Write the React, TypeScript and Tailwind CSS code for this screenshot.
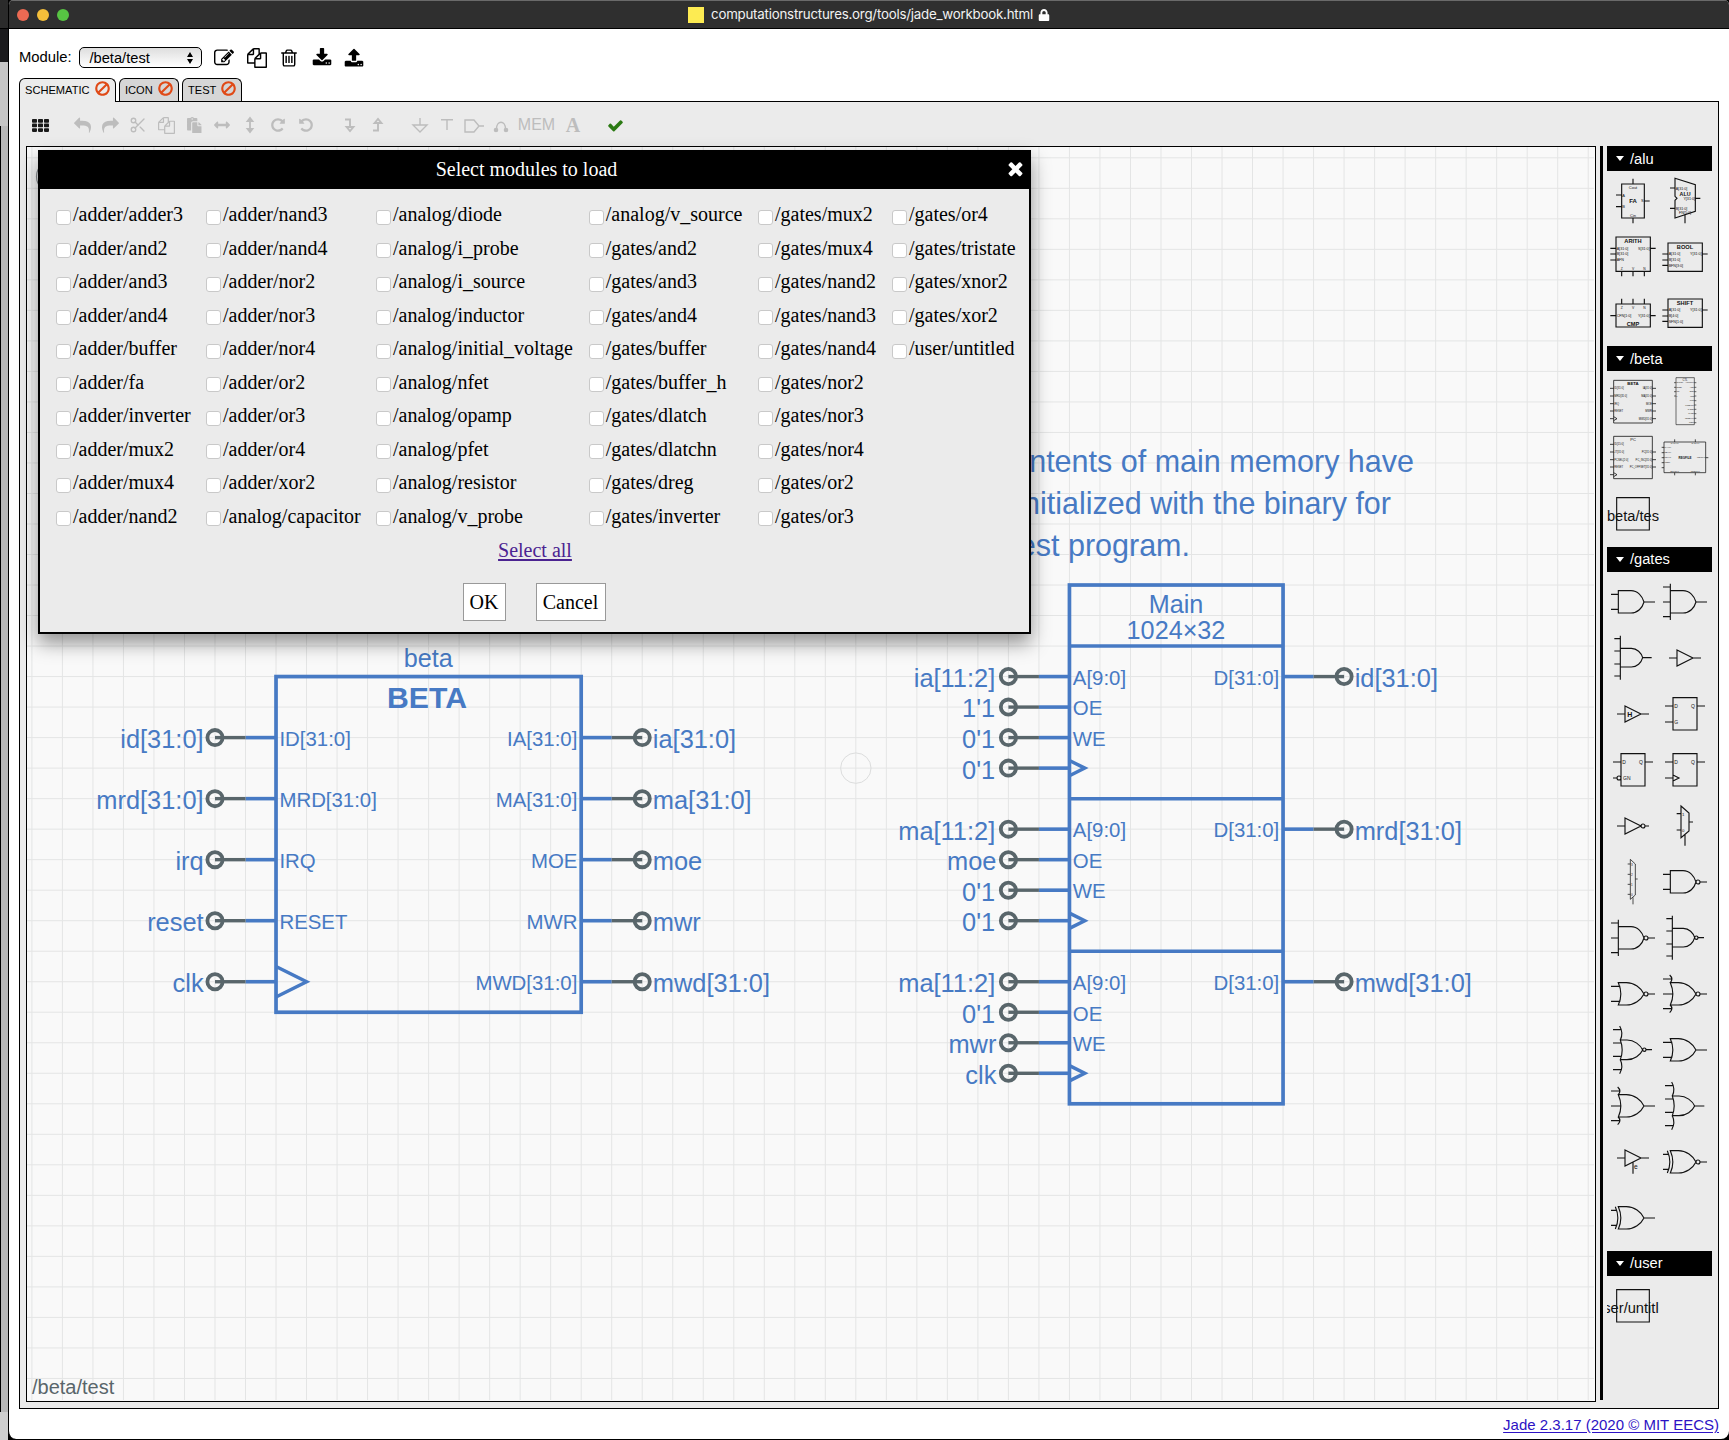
import React from "react";
import { Scissors } from "lucide-react";
import { FaPaste, FaArrowsAltH, FaLock } from "react-icons/fa";

const HELV = '"Liberation Sans", Arial, sans-serif';
const BLUE = "#477ac4";
const GRAY = "#59666b";

/* ---------- toolbar glyphs ---------- */

const GLYPHS = {
  edit: "M888 1184l116-116-152-152-116 116v56h96v96h56zm440-720q-16-16-33 1l-350 350q-17 17-1 33t33-1l350-350q17-17 1-33zm80 594v190q0 119-84.5 203.5t-203.5 84.5h-832q-119 0-203.5-84.5t-84.5-203.5v-832q0-119 84.5-203.5t203.5-84.5h832q63 0 117 25 15 7 18 23 3 17-9 29l-49 49q-14 14-32 8-23-6-45-6h-832q-66 0-113 47t-47 113v832q0 66 47 113t113 47h832q66 0 113-47t47-113v-126q0-13 9-22l64-64q15-15 35-7t20 29zm-96-738l288 288-672 672h-288v-288zm444 132l-92 92-288-288 92-92q28-28 68-28t68 28l152 152q28 28 28 68t-28 68z",
  files: "M1696 384q40 0 68 28t28 68v1216q0 40-28 68t-68 28h-960q-40 0-68-28t-28-68v-288h-544q-40 0-68-28t-28-68v-672q0-40 20-88t48-76l408-408q28-28 76-48t88-20h416q40 0 68 28t28 68v328q68-40 128-40h416zm-544 213l-299 299h299v-299zm-640-384l-299 299h299v-299zm196 647l316-316v-416h-384v416q0 40-28 68t-68 28h-416v640h512v-256q0-40 20-88t48-76zm956 804v-1152h-384v416q0 40-28 68t-68 28h-416v640h896z",
  trash: "M704 736v576q0 14-9 23t-23 9h-64q-14 0-23-9t-9-23v-576q0-14 9-23t23-9h64q14 0 23 9t9 23zm256 0v576q0 14-9 23t-23 9h-64q-14 0-23-9t-9-23v-576q0-14 9-23t23-9h64q14 0 23 9t9 23zm256 0v576q0 14-9 23t-23 9h-64q-14 0-23-9t-9-23v-576q0-14 9-23t23-9h64q14 0 23 9t9 23zm128 724v-948h-896v948q0 22 7 40.5t14.5 27 10.5 8.5h832q3 0 10.5-8.5t14.5-27 7-40.5zm-672-1076h448l-48-117q-7-9-17-11h-317q-10 2-17 11zm928 32v64q0 14-9 23t-23 9h-96v948q0 83-47 143.5t-113 60.5h-832q-66 0-113-58.5t-47-141.5v-952h-96q-14 0-23-9t-9-23v-64q0-14 9-23t23-9h309l70-167q15-37 54-63t79-26h320q40 0 79 26t54 63l70 167h309q14 0 23 9t9 23z",
  download: "M1344 1344q0-26-19-45t-45-19-45 19-19 45 19 45 45 19 45-19 19-45zm256 0q0-26-19-45t-45-19-45 19-19 45 19 45 45 19 45-19 19-45zm128-224v320q0 40-28 68t-68 28h-1472q-40 0-68-28t-28-68v-320q0-40 28-68t68-28h465l135 136q58 56 136 56t136-56l136-136h464q40 0 68 28t28 68zm-325-569q17 41-14 70l-448 448q-18 19-45 19t-45-19l-448-448q-31-29-14-70 17-39 59-39h256v-448q0-26 19-45t45-19h256q26 0 45 19t19 45v448h256q42 0 59 39z",
  upload: "M1344 1472q0-26-19-45t-45-19-45 19-19 45 19 45 45 19 45-19 19-45zm256 0q0-26-19-45t-45-19-45 19-19 45 19 45 45 19 45-19 19-45zm128-224v320q0 40-28 68t-68 28h-1472q-40 0-68-28t-28-68v-320q0-40 28-68t68-28h427q21 56 70.5 92t110.5 36h256q61 0 110.5-36t70.5-92h427q40 0 68 28t28 68zm-325-648q-17 40-59 40h-256v448q0 26-19 45t-45 19h-256q-26 0-45-19t-19-45v-448h-256q-42 0-59-40-17-39 14-69l448-448q18-19 45-19t45 19l448 448q31 30 14 69z",
  ban: "M1440 893q0-161-87-295l-754 753q137 89 297 89 111 0 211.5-43.5t173.5-116.5 116-174.5 43-212.5zm-999 299l755-754q-135-91-300-91-148 0-273 73t-198 199-73 274q0 162 89 299zm1223-299q0 157-61 300t-163.5 246-245 164-298.5 61-298.5-61-245-164-163.5-246-61-300 61-299.5 163.5-245.5 245-164 298.5-61 298.5 61 245 164 163.5 245.5 61 299.5z",
  reply: "M1792 1120q0 166-127 451-3 7-10.5 24t-13.5 30-13 22q-12 17-28 17-15 0-23.5-10t-8.5-25q0-9 2.5-26.5t2.5-23.5q5-68 5-123 0-101-17.5-181t-48.5-138.5-80-101-105.5-69.5-133-42.5-154-21.5-175.5-6h-224v256q0 26-19 45t-45 19-45-19l-512-512q-19-19-19-45t19-45l512-512q19-19 45-19t45 19 19 45v256h224q713 0 875 403 53 134 53 333z",
  repeat: "M1664 256v448q0 26-19 45t-45 19h-448q-42 0-59-40-17-39 14-69l138-138q-148-137-349-137-104 0-198.5 40.5t-163.5 109.5-109.5 163.5-40.5 198.5 40.5 198.5 109.5 163.5 163.5 109.5 198.5 40.5q119 0 225-52t179-147q7-10 23-12 15 0 25 9l137 138q9 8 9.5 20.5t-7.5 22.5q-109 132-264 204.5t-327 72.5q-156 0-298-61t-245-164-164-245-61-298 61-298 164-245 245-164 298-61q147 0 284.5 55.5t244.5 156.5l130-129q29-31 70-14 39 17 39 59z",
  check: "M1671 566q0 40-28 68l-724 724-136 136q-28 28-68 28t-68-28l-136-136-362-362q-28-28-28-68t28-68l136-136q28-28 68-28t68 28l294 295 656-657q28-28 68-28t68 28l136 136q28 28 28 68z",
  times: "M1490 1322q0 40-28 68l-136 136q-28 28-68 28t-68-28l-294-294-294 294q-28 28-68 28t-68-28l-136-136q-28-28-28-68t28-68l294-294-294-294q-28-28-28-68t28-68l136-136q28-28 68-28t68 28l294 294 294-294q28-28 68-28t68 28l136 136q28 28 28 68t-28 68l-294 294 294 294q28 28 28 68z",
};

function Glyph({ name, size, flip }: { name: keyof typeof GLYPHS; size: number; flip?: boolean }) {
  return (
    <svg width={size} height={size} viewBox="0 0 1792 1792" fill="currentColor" className="shrink-0 overflow-visible">
      <path d={GLYPHS[name]} transform={flip ? "translate(1792 0) scale(-1 1)" : undefined} />
    </svg>
  );
}

function Line({ d, w = 20, h = 20, sw = 1.4 }: { d: string; w?: number; h?: number; sw?: number }) {
  return (
    <svg width={w} height={h} viewBox={`0 0 ${w} ${h}`} fill="none" stroke="currentColor" strokeWidth={sw} className="shrink-0">
      <path d={d} />
    </svg>
  );
}

function Cell({ w, children }: { w: string; children?: React.ReactNode }) {
  return <div className={`flex h-full shrink-0 items-center justify-center ${w}`}>{children}</div>;
}

function Toolbar() {
  return (
    <div className="flex h-[44px] items-center pt-[2px] text-[#bdbdbd]">
      <Cell w="w-[40px]">
        <svg width="17" height="13" viewBox="0 0 17 13" fill="#1a1a1a">
          {[0, 1, 2].map((r) =>
            [0, 1, 2].map((c) => <rect key={`${r}${c}`} x={c * 6} y={r * 4.6} width="5" height="3.7" rx="0.8" />)
          )}
        </svg>
      </Cell>
      <div className="w-[8px]" />
      <Cell w="w-[28px]"><Glyph name="reply" size={17} /></Cell>
      <Cell w="w-[28px]"><Glyph name="reply" size={17} flip /></Cell>
      <Cell w="w-[28px]"><Scissors size={18} strokeWidth={1.8} /></Cell>
      <Cell w="w-[28px]"><Glyph name="files" size={17} /></Cell>
      <Cell w="w-[28px]"><FaPaste size={16.5} /></Cell>
      <Cell w="w-[28px]"><FaArrowsAltH size={16} /></Cell>
      <Cell w="w-[28px]"><Line d="M10 4V16M7.600 6L10 3L12.400 6ZM7.600 14L10 17L12.400 14Z" sw={1.8} /></Cell>
      <Cell w="w-[28px]"><Glyph name="repeat" size={16} /></Cell>
      <Cell w="w-[28px]"><Glyph name="repeat" size={16} flip /></Cell>
      <div className="w-[15px]" />
      <Cell w="w-[28px]"><Line d="M6 4.5H11V13M7.6 12L11 16L14.4 12Z" sw={1.9} /></Cell>
      <Cell w="w-[28px]"><Line d="M6 15.5H11V7M7.6 8L11 4L14.4 8Z" sw={1.9} /></Cell>
      <div className="w-[15px]" />
      <Cell w="w-[27px]"><Line d="M10 3V10M3 10H17L10 17Z" /></Cell>
      <Cell w="w-[27px]"><Line d="M4 4.8H16M10 4.8V15" /></Cell>
      <Cell w="w-[27px]"><Line d="M1 5H10L15 11L10 17H1ZM15 11H20" /></Cell>
      <Cell w="w-[27px]">
        <svg width="18" height="16" viewBox="0 0 18 16" fill="none" stroke="currentColor" strokeWidth="1.4">
          <path d="M4.5 12C4.5 3 13.5 3 13.5 12" />
          <circle cx="4" cy="13" r="1.6" fill="currentColor" />
          <circle cx="14" cy="13" r="1.6" fill="currentColor" />
        </svg>
      </Cell>
      <Cell w="w-[45px]"><span className="text-[16px]">MEM</span></Cell>
      <Cell w="w-[28px]">
        <span className="font-bold text-[20px] font-['Liberation_Serif',serif]">A</span>
      </Cell>
      <div className="w-[10px]" />
      <div className="flex text-[#2b7a13]"><Cell w="w-[37px]"><Glyph name="check" size={17} /></Cell></div>
    </div>
  );
}

/* ---------- schematic ---------- */

const U = 30.516;
const gx = (n: number) => 31.9 + n * U;
const gy = (n: number) => 157.8 + n * U;

function Port({ x, y, side, label, gap = 11.4 }: { x: number; y: number; side: "l" | "r"; label: string; gap?: number }) {
  const s = side === "l" ? -1 : 1;
  const cx = gx(x + 2 * s);
  const cy = gy(y);
  return (
    <g>
      <line x1={gx(x)} y1={cy} x2={gx(x + s)} y2={cy} stroke={BLUE} strokeWidth="3.6" />
      <line x1={gx(x + s)} y1={cy} x2={cx} y2={cy} stroke={GRAY} strokeWidth="3.4" />
      <circle cx={cx} cy={cy} r="7.6" fill="none" stroke={GRAY} strokeWidth="3.8" />
      <text x={cx + s * gap} y={cy + 10.4} textAnchor={side === "l" ? "end" : "start"} fontSize="25.4" fill={BLUE}>
        {label}
      </text>
    </g>
  );
}

function PinName({ x, y, side, label }: { x: number; y: number; side: "l" | "r"; label: string }) {
  return (
    <text x={gx(x) + (side === "l" ? 3.4 : -3.8)} y={gy(y) + 8.3} textAnchor={side === "l" ? "start" : "end"} fontSize="20.4" fill={BLUE}>
      {label}
    </text>
  );
}

const betaPins: [number, string, string, string, string][] = [
  [19, "id[31:0]", "ID[31:0]", "ia[31:0]", "IA[31:0]"],
  [21, "mrd[31:0]", "MRD[31:0]", "ma[31:0]", "MA[31:0]"],
  [23, "irq", "IRQ", "moe", "MOE"],
  [25, "reset", "RESET", "mwr", "MWR"],
  [27, "clk", "", "mwd[31:0]", "MWD[31:0]"],
];

const memPorts: [number, string[], string][] = [
  [17, ["ia[11:2]", "1'1", "0'1", "0'1"], "id[31:0]"],
  [22, ["ma[11:2]", "moe", "0'1", "0'1"], "mrd[31:0]"],
  [27, ["ma[11:2]", "0'1", "mwr", "clk"], "mwd[31:0]"],
];

function Schematic() {
  const cols = Array.from({ length: 52 }, (_, i) => gx(i));
  const rows = Array.from({ length: 41 }, (_, i) => gy(i));
  return (
    <svg width="1568" height="1254" viewBox="27 147 1568 1254" fontFamily={HELV} className="block">
      <g stroke="#e4e5e5" strokeWidth="1">
        {cols.map((x) => <line key={x} x1={x} y1="147" x2={x} y2="1400" />)}
        {rows.map((y) => <line key={y} x1="27" y1={y} x2="1594" y2={y} />)}
      </g>
      <circle cx="52.500" cy="176.500" r="16" fill="none" stroke="#8a8f92" strokeWidth="1.2" />
      <circle cx={gx(27)} cy={gy(20)} r="15.2" fill="none" stroke="#dcdddd" strokeWidth="1" />

      <g fill={BLUE} fontSize="30.5" textAnchor="end">
        <text x="1414" y="472">The contents of main memory have</text>
        <text x="1391" y="514">been initialized with the binary for</text>
        <text x="1190" y="556">the test program.</text>
      </g>

      <text x="428.3" y="667" textAnchor="middle" fontSize="25.2" fill={BLUE}>beta</text>
      <text x="427" y="707.6" textAnchor="middle" fontSize="30.2" fontWeight="bold" fill={BLUE}>BETA</text>
      {betaPins.map(([y, lo, li, ro, ri]) => (
        <g key={y}>
          <Port x={8} y={y} side="l" label={lo} />
          <Port x={18} y={y} side="r" label={ro} gap={10.6} />
          {li && <PinName x={8} y={y} side="l" label={li} />}
          <PinName x={18} y={y} side="r" label={ri} />
        </g>
      ))}
      <rect x={gx(8)} y={gy(17)} width={10 * U} height={11 * U} fill="none" stroke={BLUE} strokeWidth="3.7" />
      <path d={`M${gx(8)} ${gy(26.5)}L${gx(9)} ${gy(27)}L${gx(8)} ${gy(27.5)}`} fill="none" stroke={BLUE} strokeWidth="3.5" />

      <g fill={BLUE} fontSize="25.2" textAnchor="middle">
        <text x="1176" y="612.7">Main</text>
        <text x="1176" y="638.8">1024×32</text>
      </g>
      {memPorts.map(([y, labels, out]) => (
        <g key={y}>
          {labels.map((l, i) => <Port key={i} x={34} y={y + i} side="l" label={l} gap={/[\]1]$/.test(l) ? 13.2 : 12} />)}
          <Port x={41} y={y} side="r" label={out} gap={10.6} />
          <PinName x={34} y={y} side="l" label="A[9:0]" />
          <PinName x={34} y={y + 1} side="l" label="OE" />
          <PinName x={34} y={y + 2} side="l" label="WE" />
          <PinName x={41} y={y} side="r" label="D[31:0]" />
          <path d={`M${gx(34)} ${gy(y + 2.75)}L${gx(34.5)} ${gy(y + 3)}L${gx(34)} ${gy(y + 3.25)}`} fill="none" stroke={BLUE} strokeWidth="3.5" />
          <line x1={gx(34)} x2={gx(41)} y1={gy(y - 1)} y2={gy(y - 1)} stroke={BLUE} strokeWidth="3.5" />
        </g>
      ))}
      <rect x={gx(34)} y={gy(14)} width={7 * U} height={17 * U} fill="none" stroke={BLUE} strokeWidth="3.7" />

      <text x="32" y="1394" fontSize="20" fill={GRAY}>/beta/test</text>
    </svg>
  );
}

/* ---------- dialog ---------- */

const modules = [
  ["/adder/adder3", "/adder/and2", "/adder/and3", "/adder/and4", "/adder/buffer", "/adder/fa", "/adder/inverter", "/adder/mux2", "/adder/mux4", "/adder/nand2"],
  ["/adder/nand3", "/adder/nand4", "/adder/nor2", "/adder/nor3", "/adder/nor4", "/adder/or2", "/adder/or3", "/adder/or4", "/adder/xor2", "/analog/capacitor"],
  ["/analog/diode", "/analog/i_probe", "/analog/i_source", "/analog/inductor", "/analog/initial_voltage", "/analog/nfet", "/analog/opamp", "/analog/pfet", "/analog/resistor", "/analog/v_probe"],
  ["/analog/v_source", "/gates/and2", "/gates/and3", "/gates/and4", "/gates/buffer", "/gates/buffer_h", "/gates/dlatch", "/gates/dlatchn", "/gates/dreg", "/gates/inverter"],
  ["/gates/mux2", "/gates/mux4", "/gates/nand2", "/gates/nand3", "/gates/nand4", "/gates/nor2", "/gates/nor3", "/gates/nor4", "/gates/or2", "/gates/or3"],
  ["/gates/or4", "/gates/tristate", "/gates/xnor2", "/gates/xor2", "/user/untitled"],
];

function Dialog() {
  return (
    <div className="absolute left-[11px] top-[3px] flex h-[484px] w-[993px] flex-col border-2 border-black bg-[#ebebeb] text-[20px] text-black shadow-[0_9px_18px_rgba(0,0,0,0.42)] font-['Liberation_Serif',serif]">
      <div className="flex h-[37px] shrink-0 items-center bg-black pb-[4px] text-white">
        <div className="flex-1 pr-[16px] text-center leading-[24px]">Select modules to load</div>
        <div className="absolute right-[3px] top-[6px]"><Glyph name="times" size={21} /></div>
      </div>
      <div className="grid grid-cols-[150px_170px_212.8px_169.2px_134px_auto] pl-[16px] pt-[8px]">
        {modules.map((col, i) => (
          <div key={i} className="flex flex-col">
            {col.map((m, j) => (
              <label key={m} className={`flex items-center whitespace-nowrap ${j % 2 ? "h-[33px]" : "h-[34px]"}`}>
                <span className="relative top-[3px] mr-[2px] h-[15px] w-[15px] shrink-0 rounded-[3px] border border-[#c9c9c9] bg-white" />
                {m}
              </label>
            ))}
          </div>
        ))}
      </div>
      <div className="flex h-[34px] items-center justify-center pl-[1px] pt-px text-[#4b2391]">
        <a className="underline underline-offset-2">Select all</a>
      </div>
      <div className="mt-[17px] flex justify-center gap-[30px] pr-px">
        <button className="h-[38px] w-[43px] border border-[#999] bg-white">OK</button>
        <button className="h-[38px] w-[70px] border border-[#999] bg-white">Cancel</button>
      </div>
    </div>
  );
}

/* ---------- parts bin ---------- */

function Part({ d, sw = 3.4, children }: { d: string; sw?: number; children?: React.ReactNode }) {
  return (
    <svg width="52" height="56" viewBox="-78 -84 156 168" className="block overflow-hidden" fontFamily={HELV} fill="#111">
      <path d={d} fill="none" stroke="#111" strokeWidth={sw} />
      {children}
    </svg>
  );
}

function T({ x, y, s = 10, a = "start", b, children }: { x: number; y: number; s?: number; a?: "start" | "middle" | "end"; b?: boolean; children: string }) {
  return (
    <text x={x} y={y} fontSize={s} textAnchor={a} fontWeight={b ? "bold" : "normal"}>
      {children}
    </text>
  );
}

const AND = "M-44-34H-6C14-34 28-18 33 0C28 18 14 33-6 33H-44Z";
const AND_S = "M-38-29H-5C12-29 25-15 29-1C25 14 12 27-5 27H-38";
const OR = "M-44-34H-20C4-34 24-18 33 0C24 18 4 33-20 33H-44Q-29 0-44-34Z";
const OR_S = "M-38-30H-18C4-30 22-15 29 0C22 15 4 29-18 29H-38Q-27 0-38-30Z";
const IN2 = "M-66-23H-44M-66 22H-44";
const IN2C = "M-66-23H-38M-66 22H-38";
const IN3 = "M-66-45H-44M-66 0H-44M-66 44H-44M-44-55V54";
const IN3C = "M-66-45H-40M-66 0H-37M-66 44H-40M-46-57Q-34-46-44-34M-44 33Q-34 44-46 56";
const IN4 = "M-56-58H-38M-56-21H-38M-56 18H-38M-56 54H-38M-38-67V65";
const IN4C = "M-60-61H-34M-60-21H-34M-60 19H-34M-60 59H-34M-40-72Q-28-51-38-30M-38 29Q-28 50-40 71";
const OUT = "M33 0H66";
const BUB = "M45 0A6 6 0 1 0 33 0A6 6 0 1 0 45 0M45 0H66";
const BUB_S = "M39-1A5 5 0 1 0 29-1A5 5 0 1 0 39-1M39-1H57";
const TRI = "M-24-24L24 0L-24 24ZM-48 0H-24";
const XARC = "M-53-34Q-38 0-53 33";
const FF = "M-36-49H36V48H-36ZM36-24H60M-60-24H-36";

const aluParts = [
  <Part d="M-34-51H34V51H-34ZM0-67V-51M0 51V67M-51-18H-34M-51 17H-34M34 0H50">
    <T x={0} y={7} s={18} a="middle" b>FA</T><T x={0} y={-37} s={12} a="middle">Cout</T><T x={0} y={49} s={12} a="middle">Cin</T>
    <T x={-32} y={-13} s={12}>A</T><T x={-32} y={22} s={12}>B</T><T x={32} y={4} s={12} a="end">S</T>
  </Part>,
  <Part d="M-30-68L31-49V31L-30 51V-2L-24-8L-30-14ZM-45-39H-30M-45 22H-30M31-8H46M0 41V67">
    <T x={0} y={-16} s={16} a="middle" b>ALU</T><T x={-28} y={-34} s={11}>A[31:0]</T><T x={30} y={-4} s={11} a="end">Y[31:0]</T>
    <T x={-28} y={26} s={11}>B[31:0]</T><T x={0} y={38} s={11} a="middle">FN[5:0]</T>
  </Part>,
  <Part d="M-51-60H52V43H-51ZM-68-26H-51M-68-9H-51M-68 9H-51M52-26H68M-34 43V58M0 43V58M34 43V58">
    <T x={0} y={-42} s={17} a="middle" b>ARITH</T><T x={-49} y={-22} s={11}>A[31:0]</T><T x={-49} y={-5} s={11}>B[31:0]</T><T x={-49} y={13} s={11}>AFN</T>
    <T x={50} y={-22} s={11} a="end">S[31:0]</T><T x={-34} y={39} a="middle">Z</T><T x={0} y={39} a="middle">V</T><T x={34} y={39} a="middle">N</T>
  </Part>,
  <Part d="M-51-42H52V43H-51ZM-68-9H-51M-68 9H-51M-68 25H-51M52-9H68">
    <T x={0} y={-24} s={17} a="middle" b>BOOL</T><T x={-49} y={-5} s={11}>A[31:0]</T><T x={-49} y={13} s={11}>B[31:0]</T><T x={-49} y={30} s={11}>BFN[3:0]</T><T x={50} y={-5} s={11} a="end">Y[31:0]</T>
  </Part>,
  <Part d="M-51-27H52V42H-51ZM-34-43V-27M0-43V-27M34-43V-27M-68 8H-51M52 8H68">
    <T x={0} y={39} s={17} a="middle" b>CMP</T><T x={-49} y={13} s={11}>CFN[1:0]</T><T x={50} y={13} s={11} a="end">Y[31:0]</T>
    <T x={-34} y={-13} a="middle">Z</T><T x={0} y={-13} a="middle">V</T><T x={34} y={-13} a="middle">N</T>
  </Part>,
  <Part d="M-51-42H52V43H-51ZM-68-9H-51M-68 9H-51M-68 25H-51M52-9H68">
    <T x={0} y={-24} s={17} a="middle" b>SHIFT</T><T x={-49} y={-5} s={11}>A[31:0]</T><T x={-49} y={13} s={11}>B[4:0]</T><T x={-49} y={30} s={11}>SFN[1:0]</T><T x={50} y={-5} s={11} a="end">Y[31:0]</T>
  </Part>,
];

const betaParts = [
  <Part sw={2.4} d="M-58-65H58V63H-58ZM-69-41H-58M-69-18H-58M-69 5H-58M-69 27H-58M-69 50H-58M58-41H69M58-18H69M58 5H69M58 27H69M58 50H69M-58 44L-48 50L-58 56">
    <T x={0} y={-52} s={13} a="middle" b>BETA</T>
    <T x={-56} y={-38} s={8}>ID[31:0]</T><T x={-56} y={-15} s={8}>MRD[31:0]</T><T x={-56} y={8} s={8}>IRQ</T><T x={-56} y={30} s={8}>RESET</T>
    <T x={57} y={-38} s={8} a="end">IA[31:0]</T><T x={57} y={-15} s={8} a="end">MA[31:0]</T><T x={57} y={8} s={8} a="end">MOE</T><T x={57} y={30} s={8} a="end">MWR</T><T x={57} y={53} s={8} a="end">MWD[31:0]</T>
  </Part>,
  <Part sw={1.8} d="M-27-73H28V68H-27ZM-33-58H-27M-33-44H-27M-33-31H-27M-33-18H-27M28-58H34M28-44H34M28-31H34M28-18H34M28-4H34M28 9H34M28 22H34M28 35H34M28 49H34M28 62H34">
    <T x={0} y={-64} s={8} a="middle">CTL</T><T x={-26} y={-56} s={5}>ID[31:26]</T><T x={-26} y={-42} s={5}>RESET</T><T x={-26} y={-29} s={5}>IRQ</T><T x={-26} y={-16} s={5}>Z</T>
    <T x={27} y={-56} s={5} a="end">ALUFN[5:0]</T><T x={27} y={-42} s={5} a="end">ASEL</T><T x={27} y={-29} s={5} a="end">BSEL</T><T x={27} y={-16} s={5} a="end">MOE</T><T x={27} y={-2} s={5} a="end">MWR</T>
    <T x={27} y={11} s={5} a="end">PCSEL[2:0]</T><T x={27} y={24} s={5} a="end">RA2SEL</T><T x={27} y={37} s={5} a="end">WASEL</T><T x={27} y={51} s={5} a="end">WDSEL[1:0]</T><T x={27} y={64} s={5} a="end">WERF</T>
  </Part>,
  <Part sw={2.4} d="M-58-65H58V62H-58ZM-69-41H-58M-69-18H-58M-69 5H-58M-69 27H-58M-69 50H-58M58-18H69M58 5H69M58 27H69M-58 44L-48 50L-58 56">
    <T x={0} y={-52} s={12} a="middle">PC</T>
    <T x={-56} y={-38} s={8}>ID[15:0]</T><T x={-56} y={-15} s={8}>JT[31:0]</T><T x={-56} y={8} s={8}>PCSEL[2:0]</T><T x={-56} y={30} s={8}>RESET</T>
    <T x={57} y={-15} s={8} a="end">PC[31:0]</T><T x={57} y={8} s={8} a="end">PC_INC[31:0]</T><T x={57} y={30} s={8} a="end">PC_OFFSET[31:0]</T>
  </Part>,
  <Part sw={2.2} d="M-63-48H62V44H-63ZM-31-56V-48M31-56V-48M-31 44V52M31 44V52M-70-32H-63M-70-16H-63M-70-1H-63M-70 14H-63M-70 29H-63M62-1H70">
    <T x={0} y={3} s={9} a="middle" b>REGFILE</T><T x={-31} y={-41} s={6} a="middle">RA1[4:0]</T><T x={31} y={-41} s={6} a="middle">RA2[4:0]</T>
    <T x={-31} y={43} s={6} a="middle">RD1[31:0]</T><T x={31} y={43} s={6} a="middle">RD2[31:0]</T>
    <T x={-62} y={-30} s={6}>RA[4:0]</T><T x={-62} y={-14} s={6}>RB[4:0]</T><T x={-62} y={1} s={6}>RC[4:0]</T><T x={-62} y={16} s={6}>WERF</T><T x={61} y={1} s={6} a="end">WD[31:0]</T>
  </Part>,
  <Part d="M-49-49H49V48H-49Z"><T x={0} y={21} s={44} a="middle">/beta/test</T></Part>,
];

const gateParts = [
  <Part d={AND + IN2 + OUT} />,
  <Part d={AND + IN3 + OUT} />,
  <Part d={AND_S + IN4 + "M29-1H56"} />,
  <Part d={TRI + "M24 0H48"} />,
  <Part d={TRI + "M24 0H48"}><T x={-10} y={8} s={21} a="middle" b>H</T></Part>,
  <Part d={FF + "M-60 24H-36"}><T x={-32} y={-19} s={15}>D</T><T x={30} y={-19} s={15} a="end">Q</T><T x={-32} y={29} s={15}>G</T></Part>,
  <Part d={FF + "M-60 24H-48M-36 24A6 6 0 1 0-48 24A6 6 0 1 0-36 24"}><T x={-32} y={-19} s={15}>D</T><T x={30} y={-19} s={15} a="end">Q</T><T x={-30} y={29} s={15}>GN</T></Part>,
  <Part d={FF + "M-60 24H-36M-36 15L-18 24L-36 33"}><T x={-32} y={-19} s={15}>D</T><T x={30} y={-19} s={15} a="end">Q</T></Part>,
  <Part d={TRI + "M36 0A6 6 0 1 0 24 0A6 6 0 1 0 36 0M36 0H48"} />,
  <Part d="M-12-60L12-39V15L-12 35ZM-25-37H-12M-25 12H-12M12-12H24M0 25V59"><T x={-9} y={-31} s={13}>1</T><T x={-9} y={17} s={13}>0</T></Part>,
  <Part sw={2.2} d="M-8-68L7-54V39L-8 52ZM-16-54H-8M-16-23H-8M-16 7H-8M-16 37H-8M7-9H14M0 46V67"><T x={-6} y={-49} s={9}>3</T><T x={-6} y={-19} s={9}>2</T><T x={-6} y={11} s={9}>1</T><T x={-6} y={41} s={9}>0</T></Part>,
  <Part d={AND + IN2 + BUB} />,
  <Part d={AND + IN3 + BUB} />,
  <Part d={AND_S + IN4 + BUB_S} />,
  <Part d={OR + IN2C + BUB} />,
  <Part d={OR + IN3C + BUB} />,
  <Part d={OR_S + IN4C + BUB_S} />,
  <Part d={OR + IN2C + OUT} />,
  <Part d={OR + IN3C + OUT} />,
  <Part d={OR_S + IN4C + "M29 0H58"} />,
  <Part d="M-24-36L24-12L-24 12ZM-48-12H-24M24-12H48M0 0V35"><T x={3} y={21} s={20}>e</T></Part>,
  <Part d={OR + XARC + "M-66-23H-49M-66 22H-49" + BUB} />,
  <Part d={OR + XARC + "M-66-23H-49M-66 22H-49" + OUT} />,
];

const userParts = [
  <Part d="M-49-49H49V48H-49Z"><T x={0} y={21} s={44} a="middle">/user/untitled</T></Part>,
];

function Section({ title, parts }: { title: string; parts: React.ReactNode[] }) {
  return (
    <div className="mb-[5px]">
      <div className="mb-[2.3px] flex h-[25px] items-center bg-black pl-[9px] text-[14.67px] text-white">
        <svg width="8" height="5" viewBox="0 0 8 5" fill="white" className="mr-[6px]"><path d="M0 0H8L4 5Z" /></svg>
        {title}
      </div>
      <div className="grid grid-cols-[52px_52px]">
        {parts.map((p, i) => <div key={i} className="h-[56px]">{p}</div>)}
      </div>
    </div>
  );
}

/* ---------- window ---------- */

function Tab({ label, w, active }: { label: string; w: string; active?: boolean }) {
  return (
    <div
      className={`relative flex items-center justify-between rounded-t-[6px] border border-b-0 border-black px-[5px] text-[11.1px] ${w} ${
        active ? "z-10 h-[24px] bg-[#ebebeb]" : "h-[23px] bg-[#d6d6d6]"
      }`}
    >
      <span>{label}</span>
      <span className="relative -right-px -top-[2px] text-[#e04a17]"><Glyph name="ban" size={17} /></span>
    </div>
  );
}

export default function App() {
  return (
    <div className="flex h-[1440px] w-[1729px] overflow-hidden bg-[#bdbdbd] text-black font-['Liberation_Sans',Arial,sans-serif]">
      <div className="flex w-[8px] shrink-0 flex-col">
        <div className="h-[28px] bg-[#2b2b2b]" />
        <div className="h-[34px] border-t border-black bg-[#1b1b1d]" />
        <div className="h-[64px] bg-[#c6c6c6]" />
        <div className="h-[1286px] border-l border-black bg-[#b9b9b9]" />
        <div className="flex-1 bg-[#cfcfcf]" />
      </div>
      <div className="flex flex-1 flex-col bg-black">
        <div className="flex h-[1439px] flex-col overflow-hidden rounded-b-[8px] rounded-t-[5px] border-l border-black bg-white">
          <div className="flex h-[29px] shrink-0 items-center border-b border-t border-b-black border-t-[#6a6a6a] bg-[#2f2f2f] text-[13.3px] text-[#f2f2f2] font-['Inter',sans-serif]">
            <div className="flex w-[679px] items-center gap-[8px] pl-[8px]">
              <div className="h-[12px] w-[12px] rounded-full bg-[#ec6a53]" />
              <div className="h-[12px] w-[12px] rounded-full bg-[#f4bf3a]" />
              <div className="h-[12px] w-[12px] rounded-full bg-[#57c443]" />
            </div>
            <div className="h-[16px] w-[16px] bg-[#fdeb52]" />
            <div className="ml-[7px] w-[327px] whitespace-nowrap tracking-[-0.22px]">computationstructures.org/tools/jade_workbook.html</div>
            <FaLock size={12} className="text-white" />
            <div className="flex-1" />
          </div>

          <div className="flex h-[48px] shrink-0 items-center pl-[10px]">
            <div className="flex items-center pt-[9px] text-[14.8px]">
              <span className="w-[60px]">Module:</span>
              <div className="flex h-[21px] w-[123px] items-center rounded-[5px] border border-black bg-gradient-to-b from-[#dedede] to-white pl-[9.500px] pr-[7px]">
                <span className="flex-1 text-[14.67px]">/beta/test</span>
                <svg width="8" height="12" viewBox="0 0 8 12" fill="black"><path d="M4 0L7 5H1ZM4 12L1 7H7Z" /></svg>
              </div>
              <div className="ml-[12px] flex items-center gap-[12.500px]">
                <Glyph name="edit" size={20} />
                <Glyph name="files" size={20} />
                <Glyph name="trash" size={20} />
                <Glyph name="download" size={20} />
                <Glyph name="upload" size={20} />
              </div>
            </div>
          </div>

          <div className="-mb-px flex h-[25px] shrink-0 items-start gap-[3px] pl-[10px] pt-px">
            <Tab label="SCHEMATIC" w="w-[97px]" active />
            <Tab label="ICON" w="w-[60px]" />
            <Tab label="TEST" w="w-[60px]" />
          </div>

          <div className="ml-[10px] flex h-[1308px] w-[1700px] shrink-0 flex-col border border-black bg-[#ebebeb]">
            <Toolbar />
            <div className="flex pl-[6px]">
              <div className="relative h-[1256px] w-[1570px] shrink-0 border border-black bg-[#f9f9f9]">
                <Schematic />
                <Dialog />
              </div>
              <div className="ml-[4px] h-[1254px] w-[3px] shrink-0 bg-black" />
              <div className="ml-[4px] w-[105px] shrink-0">
                <Section title="/alu" parts={aluParts} />
                <Section title="/beta" parts={betaParts} />
                <Section title="/gates" parts={gateParts} />
                <Section title="/user" parts={userParts} />
              </div>
            </div>
          </div>

          <div className="flex justify-end pr-[10px] pt-[7px] text-[15px] leading-[18px] text-[#2c12c4]">
            <a className="underline underline-offset-2">Jade 2.3.17 (2020 © MIT EECS)</a>
          </div>
        </div>
      </div>
    </div>
  );
}
